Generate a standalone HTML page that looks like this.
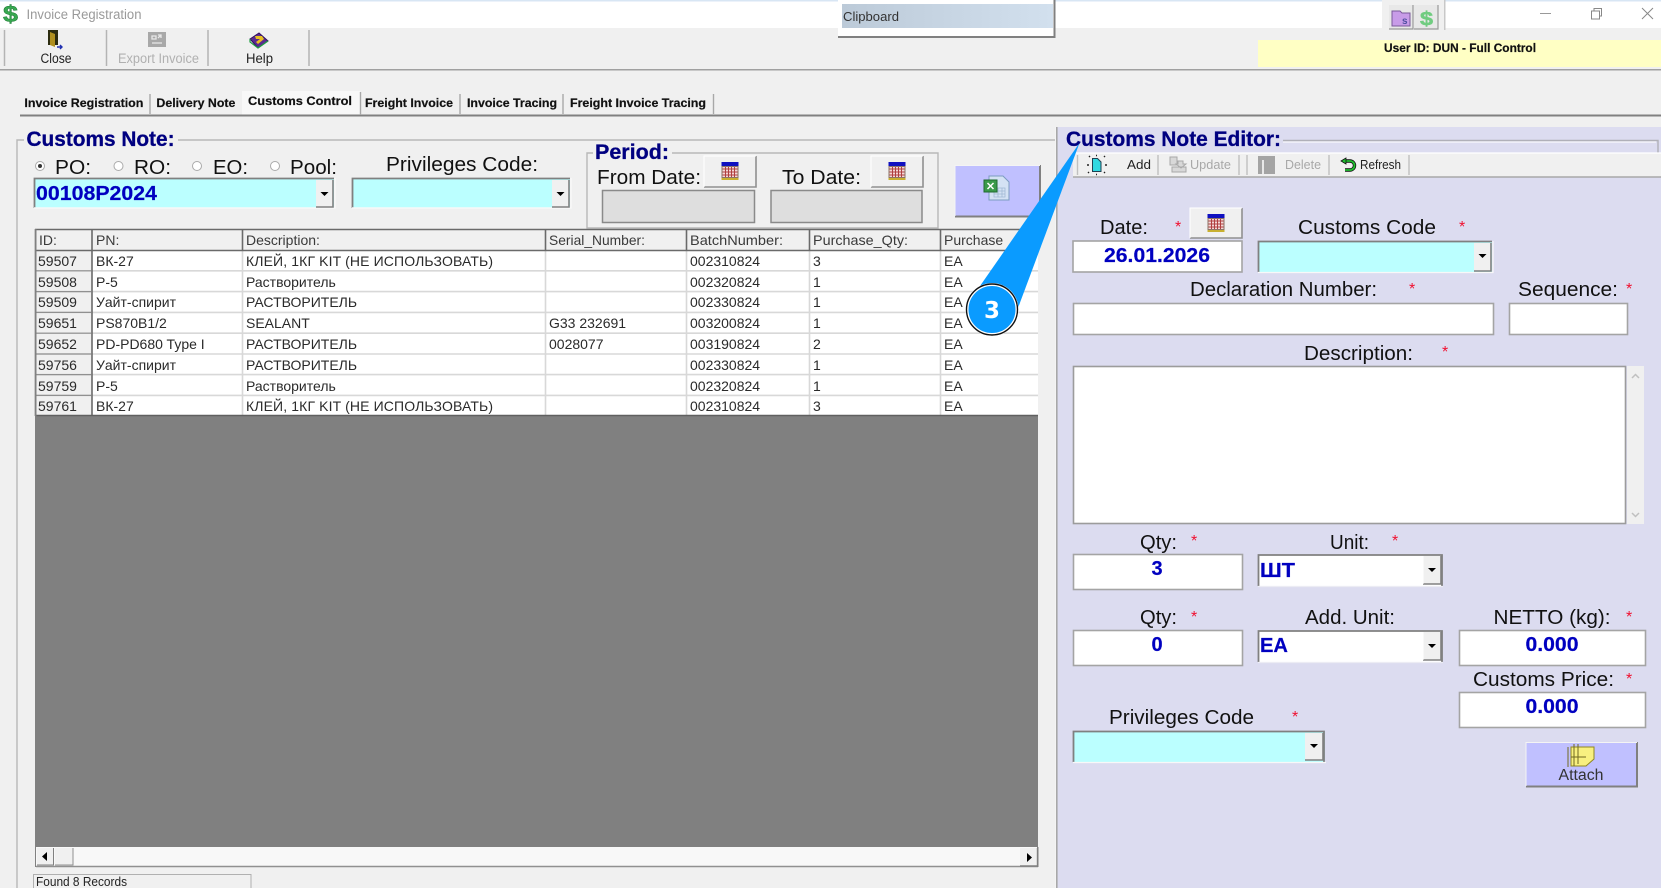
<!DOCTYPE html>
<html><head><meta charset="utf-8"><title>Invoice Registration</title>
<style>
html,body{margin:0;padding:0;background:#f0f0f0;width:1661px;height:888px;overflow:hidden}
svg{display:block;filter:blur(.35px)}
text{font-family:"Liberation Sans",sans-serif}
.t{font-size:14px;fill:#2a2a2a}
.h{font-size:14px;fill:#3a3a3a}
.l{font-size:20px;fill:#111}
.n{font-size:21px;font-weight:bold;fill:#000080;stroke:#000080;stroke-width:.3px}
.v{font-size:20px;font-weight:bold;fill:#0000c0;stroke:#0000c0;stroke-width:.2px}
.s{font-size:16px;fill:#f01030}
.b{font-size:12px;font-weight:bold;fill:#111;stroke:#111;stroke-width:.2px}
.m{font-size:13px;fill:#222}
.g{font-size:13px;fill:#a8a8a8}
</style></head><body>
<svg width="1661" height="888" viewBox="0 0 1661 888" xmlns="http://www.w3.org/2000/svg">
<defs>
<g id="cal"><rect x="0" y="0" width="17" height="18" fill="#8c7468"/><rect x="0" y="0" width="17" height="4" fill="#1010c0"/><rect x="1" y="5" width="15" height="10" fill="#f4d8d8"/><path d="M1 7h15M1 10h15M1 13h15M4 5v10M7 5v10M10 5v10M13 5v10" stroke="#b04040" stroke-width="1"/><rect x="0" y="16" width="17" height="2" fill="#c8b030"/></g>
<g id="arr"><path d="M-4-2h8l-4 4z" fill="#000"/></g>
<linearGradient id="cg"><stop offset="0" stop-color="#bccad8"/><stop offset="1" stop-color="#d2e0ee"/></linearGradient>
</defs>

<!-- title bar -->
<rect width="1661" height="28" fill="#fff"/>
<rect width="1661" height="1.5" fill="#d8e6f4"/>
<text x="3" y="22" font-size="23" font-weight="bold" fill="#38a850" stroke="#1c7a34" stroke-width=".5" textLength="15" lengthAdjust="spacingAndGlyphs">$</text>
<text x="26.5" y="19" font-size="13.5" fill="#9a9a9a" textLength="115" lengthAdjust="spacingAndGlyphs">Invoice Registration</text>

<!-- clipboard popup -->
<rect x="838" y="0" width="217" height="38" fill="#fff"/>
<path d="M838 37H1054.5V0" fill="none" stroke="#808080" stroke-width="2"/>
<rect x="842" y="4" width="211" height="24" fill="url(#cg)"/>
<text x="843" y="21" font-size="12.5" fill="#333" textLength="56" lengthAdjust="spacingAndGlyphs">Clipboard</text>

<!-- top right icons -->
<rect x="1382" y="0" width="63" height="30" fill="#f0f0f0"/>
<rect x="1444" y="0" width="1.5" height="30" fill="#c8c8c8"/>
<rect x="1389" y="5" width="24" height="24" fill="#e8e8e8"/><path d="M1389 29h24v-24" fill="none" stroke="#999" stroke-width="1.2"/>
<rect x="1414" y="5" width="24" height="24" fill="#e8e8e8"/><path d="M1414 29h24v-24" fill="none" stroke="#999" stroke-width="1.2"/>
<path d="M1392 11h8l2 2h8v13h-18z" fill="#c89ce8" stroke="#7a5a9a"/>
<text x="1402" y="24" font-size="10" font-weight="bold" fill="#5050a0">s</text>
<text x="1420" y="25" font-size="19" font-weight="bold" fill="#70cc80" stroke="#70cc80" stroke-width=".5" textLength="13" lengthAdjust="spacingAndGlyphs">$</text>
<path d="M1540 13.5h11" stroke="#999" stroke-width="1"/>
<rect x="1591.5" y="11" width="8" height="8" fill="none" stroke="#888"/><path d="M1594 11V8.500h7.500V16H1599.500" fill="none" stroke="#888"/>
<path d="M1642 8l11 11M1653 8l-11 11" stroke="#888" stroke-width="1"/>

<!-- main toolbar -->
<rect y="69" width="1661" height="1.5" fill="#a0a0a0"/>
<rect x="1258" y="40" width="403" height="27" fill="#ffffc4"/>
<text x="1384" y="52" class="b" textLength="152" lengthAdjust="spacingAndGlyphs">User ID: DUN - Full Control</text>
<path d="M4.5 30v36M106.5 30v36M208 30v36M309 30v36" stroke="#b4b4b4" stroke-width="1.5"/>
<!-- close icon -->
<path d="M48 30h10v15h-10z" fill="#2c2c10"/><path d="M50 32l5 2v13l-5-2z" fill="#b09020"/><path d="M57 47h5m-2-2l2 2-2 2" stroke="#2030b0" stroke-width="1.4" fill="none"/>
<text x="40.5" y="63" font-size="13.5" fill="#222" textLength="31" lengthAdjust="spacingAndGlyphs">Close</text>
<!-- export icon -->
<rect x="148" y="32" width="18" height="15" fill="#a8a8a8"/><path d="M152 36h4v3h-4zM161 35l-3 3m0-3h3v3M152 43h10" stroke="#e8e8e8" fill="none" stroke-width="1.300"/>
<text x="118" y="63" font-size="13.5" fill="#b0b0b0" textLength="81" lengthAdjust="spacingAndGlyphs">Export Invoice</text>
<!-- help icon -->
<path d="M250 39l9-6 9 8-10 7z" fill="#5a2a90" stroke="#301060"/><path d="M250 39v3l8 6 10-7" fill="none" stroke="#20a040" stroke-width="1.200"/><path d="M255 36h7l2 3-6 5-2-2 4-3h-4z" fill="#e8c020"/>
<text x="246" y="63" font-size="13.5" fill="#222" textLength="27" lengthAdjust="spacingAndGlyphs">Help</text>

<!-- tabs -->
<rect x="242" y="91" width="118" height="25" fill="#f8f8f8"/>
<path d="M20 115.500H1661" stroke="#808080" stroke-width="2"/>
<path d="M150 94v20M360.500 92v23M460 94v20M563 94v20M713.500 94v20" stroke="#a8a8a8" stroke-width="1.400"/>
<text x="24.400" y="107" class="b" textLength="119" lengthAdjust="spacingAndGlyphs">Invoice Registration</text>
<text x="156.400" y="107" class="b" textLength="79" lengthAdjust="spacingAndGlyphs">Delivery Note</text>
<text x="248" y="105" class="b" textLength="104" lengthAdjust="spacingAndGlyphs">Customs Control</text>
<text x="365" y="107" class="b" textLength="88" lengthAdjust="spacingAndGlyphs">Freight Invoice</text>
<text x="467" y="107" class="b" textLength="90" lengthAdjust="spacingAndGlyphs">Invoice Tracing</text>
<text x="570" y="107" class="b" textLength="136" lengthAdjust="spacingAndGlyphs">Freight Invoice Tracing</text>

<!-- customs note group -->
<path d="M24 140H17V888M178 140H1055" fill="none" stroke="#b8b8b8" stroke-width="1.400"/>
<text x="26.500" y="146" class="n" textLength="148" lengthAdjust="spacingAndGlyphs">Customs Note:</text>

<!-- radios -->
<circle cx="40" cy="166" r="4.500" fill="#fff" stroke="#aaa"/><circle cx="40" cy="166" r="2" fill="#333"/>
<circle cx="118.500" cy="166" r="4.500" fill="#fff" stroke="#aaa"/>
<circle cx="197" cy="166" r="4.500" fill="#fff" stroke="#aaa"/>
<circle cx="275" cy="166" r="4.500" fill="#fff" stroke="#aaa"/>
<text x="55" y="174" class="l" textLength="36" lengthAdjust="spacingAndGlyphs">PO:</text>
<text x="134" y="174" class="l" textLength="37" lengthAdjust="spacingAndGlyphs">RO:</text>
<text x="213" y="174" class="l" textLength="35" lengthAdjust="spacingAndGlyphs">EO:</text>
<text x="290" y="174" class="l" textLength="47" lengthAdjust="spacingAndGlyphs">Pool:</text>
<text x="386" y="171" class="l" textLength="152" lengthAdjust="spacingAndGlyphs">Privileges Code:</text>

<!-- combos left -->
<rect x="34" y="178" width="300" height="30" fill="#bbffff"/><path d="M34.500 208V178.500H334" fill="none" stroke="#808080" stroke-width="1.800"/><path d="M34 208h301V178" fill="none" stroke="#f8f8f8" stroke-width="1.400"/>
<rect x="316" y="180" width="17" height="27" fill="#f0f0f0"/><path d="M316 207h17v-27" fill="none" stroke="#808080" stroke-width="1.600"/><use href="#arr" x="324.500" y="194"/>
<text x="36" y="200" class="v" textLength="121" lengthAdjust="spacingAndGlyphs">00108P2024</text>
<rect x="352" y="178" width="218" height="30" fill="#bbffff"/><path d="M352.500 208V178.500H570" fill="none" stroke="#808080" stroke-width="1.800"/><path d="M352 208h219V178" fill="none" stroke="#f8f8f8" stroke-width="1.400"/>
<rect x="552" y="180" width="17" height="27" fill="#f0f0f0"/><path d="M552 207h17v-27" fill="none" stroke="#808080" stroke-width="1.600"/><use href="#arr" x="560.500" y="194"/>

<!-- period -->
<path d="M593 153H587V228H938V153H672" fill="none" stroke="#b8b8b8" stroke-width="1.400"/>
<text x="595" y="159" class="n" textLength="74" lengthAdjust="spacingAndGlyphs">Period:</text>
<text x="597" y="184" class="l" textLength="104" lengthAdjust="spacingAndGlyphs">From Date:</text>
<text x="782" y="184" class="l" textLength="79" lengthAdjust="spacingAndGlyphs">To Date:</text>
<rect x="704" y="156" width="52" height="31" fill="#f0f0f0"/><path d="M704 187h52v-31" fill="none" stroke="#909090" stroke-width="1.600"/><path d="M704 187v-31h52" fill="none" stroke="#fff"/>
<use href="#cal" x="721.500" y="162"/>
<rect x="871" y="156" width="52" height="31" fill="#f0f0f0"/><path d="M871 187h52v-31" fill="none" stroke="#909090" stroke-width="1.600"/><path d="M871 187v-31h52" fill="none" stroke="#fff"/>
<use href="#cal" x="888.500" y="162"/>
<rect x="602.500" y="190.500" width="152" height="32" fill="#dedede" stroke="#8a8a8a" stroke-width="1.500"/>
<rect x="771" y="190.500" width="151" height="32" fill="#dedede" stroke="#8a8a8a" stroke-width="1.500"/>

<!-- excel button -->
<rect x="955" y="165" width="85" height="52" fill="#c0c0ff"/><path d="M955 216.500h85V165" fill="none" stroke="#808080" stroke-width="2"/><path d="M955 216V165.500h85" fill="none" stroke="#f4f4f4"/>
<path d="M989 176h14l6 6v18h-20z" fill="#d4e2f4" stroke="#7c9cc0"/><path d="M994 188h11v9h-11zM994 191h11M994 194h11M998 188v9M1002 188v9" fill="none" stroke="#a0b8d4" stroke-width=".8"/><rect x="984" y="180" width="13" height="12" fill="#3a9a4a" stroke="#206a30"/><path d="M987.500 183l6 6m0-6l-6 6" stroke="#fff" stroke-width="1.500"/>

<!-- table -->
<rect x="35" y="229" width="1003" height="187" fill="#fff"/>
<rect x="36" y="230" width="1002" height="20" fill="#f0f0f0"/>
<rect x="36" y="250" width="56" height="166" fill="#f0f0f0"/>
<path d="M36 270.800H1038M36 291.600H1038M36 312.400H1038M36 333.200H1038M36 354H1038M36 374.600H1038M36 395.400H1038" stroke="#d8d8d8" stroke-width="1.600"/>
<path d="M242.500 250V416M545.500 250V416M686.500 250V416M809.500 250V416M940.500 250V416" stroke="#d8d8d8" stroke-width="1.600"/>
<path d="M36 270.800H91M36 291.600H91M36 312.400H91M36 333.200H91M36 354H91M36 374.600H91M36 395.400H91" stroke="#909090" stroke-width="1.200"/>
<path d="M92 229V416M35.500 229V416M242.500 229V250M545.500 229V250M686.500 229V250M809.500 229V250M940.500 229V250" stroke="#6a6a6a" stroke-width="1.600"/>
<path d="M35 229.500H1038M35 250.500H1038" stroke="#6a6a6a" stroke-width="1.600"/>
<text x="39" y="245" class="h">ID:</text>
<text x="96" y="245" class="h">PN:</text>
<text x="246" y="245" class="h">Description:</text>
<text x="549" y="245" class="h" textLength="96" lengthAdjust="spacingAndGlyphs">Serial_Number:</text>
<text x="690" y="245" class="h" textLength="93" lengthAdjust="spacingAndGlyphs">BatchNumber:</text>
<text x="813" y="245" class="h" textLength="95" lengthAdjust="spacingAndGlyphs">Purchase_Qty:</text>
<text x="944" y="245" class="h">Purchase</text>

<text x="38" y="266" class="t">59507</text><text x="96" y="266" class="t">ВК-27</text><text x="246" y="266" class="t" textLength="247">КЛЕЙ, 1КГ KIT (НЕ ИСПОЛЬЗОВАТЬ)</text><text x="690" y="266" class="t">002310824</text><text x="813" y="266" class="t">3</text><text x="944" y="266" class="t">EA</text>
<text x="38" y="287" class="t">59508</text><text x="96" y="287" class="t">Р-5</text><text x="246" y="287" class="t">Растворитель</text><text x="690" y="287" class="t">002320824</text><text x="813" y="287" class="t">1</text><text x="944" y="287" class="t">EA</text>
<text x="38" y="307" class="t">59509</text><text x="96" y="307" class="t">Уайт-спирит</text><text x="246" y="307" class="t">РАСТВОРИТЕЛЬ</text><text x="690" y="307" class="t">002330824</text><text x="813" y="307" class="t">1</text><text x="944" y="307" class="t">EA</text>
<text x="38" y="328" class="t">59651</text><text x="96" y="328" class="t">PS870B1/2</text><text x="246" y="328" class="t">SEALANT</text><text x="549" y="328" class="t">G33 232691</text><text x="690" y="328" class="t">003200824</text><text x="813" y="328" class="t">1</text><text x="944" y="328" class="t">EA</text>
<text x="38" y="349" class="t">59652</text><text x="96" y="349" class="t">PD-PD680 Type I</text><text x="246" y="349" class="t">РАСТВОРИТЕЛЬ</text><text x="549" y="349" class="t">0028077</text><text x="690" y="349" class="t">003190824</text><text x="813" y="349" class="t">2</text><text x="944" y="349" class="t">EA</text>
<text x="38" y="370" class="t">59756</text><text x="96" y="370" class="t">Уайт-спирит</text><text x="246" y="370" class="t">РАСТВОРИТЕЛЬ</text><text x="690" y="370" class="t">002330824</text><text x="813" y="370" class="t">1</text><text x="944" y="370" class="t">EA</text>
<text x="38" y="391" class="t">59759</text><text x="96" y="391" class="t">Р-5</text><text x="246" y="391" class="t">Растворитель</text><text x="690" y="391" class="t">002320824</text><text x="813" y="391" class="t">1</text><text x="944" y="391" class="t">EA</text>
<text x="38" y="411" class="t">59761</text><text x="96" y="411" class="t">ВК-27</text><text x="246" y="411" class="t" textLength="247">КЛЕЙ, 1КГ KIT (НЕ ИСПОЛЬЗОВАТЬ)</text><text x="690" y="411" class="t">002310824</text><text x="813" y="411" class="t">3</text><text x="944" y="411" class="t">EA</text>

<!-- gray area and scrollbar -->
<rect x="35" y="416" width="1003" height="431" fill="#808080"/>
<path d="M35 415.500H1038" stroke="#606060" stroke-width="1.400"/>
<rect x="35" y="229" width="1.500" height="638" fill="#808080"/>
<rect x="36" y="847" width="1002" height="19" fill="#f8f8f8"/>
<path d="M36 866.500H1038" stroke="#909090" stroke-width="1.400"/>
<rect x="37" y="848" width="17" height="17" fill="#f0f0f0"/><path d="M37 865h16.500v-17" fill="none" stroke="#808080"/>
<path d="M47 852v9l-5-4.500z" fill="#000"/>
<rect x="55" y="848" width="18" height="17" fill="#f0f0f0"/><path d="M55 865h18v-17" fill="none" stroke="#909090"/>
<rect x="1020" y="848" width="17" height="18" fill="#f0f0f0"/><path d="M1020 866h17.500v-18" fill="none" stroke="#808080" stroke-width="1.400"/>
<path d="M1027 853v9l5-4.500z" fill="#000"/>
<rect x="1037" y="847" width="1.500" height="20" fill="#808080"/>

<!-- status -->
<path d="M33.500 888V874.500H251V888" fill="none" stroke="#b0b0b0"/>
<text x="36" y="886" font-size="12.500" fill="#222" textLength="91" lengthAdjust="spacingAndGlyphs">Found 8 Records</text>

<!-- right panel -->
<rect x="1055" y="127" width="606" height="761" fill="#dcdcf0"/>
<rect x="1055" y="127" width="1" height="761" fill="#f4f4f4"/>
<rect x="1056" y="127" width="1.600" height="761" fill="#a8a8a8"/>
<path d="M1283 140.500H1658V153" fill="none" stroke="#b0b0b8" stroke-width="1.400"/>
<path d="M1283 142H1656" stroke="#fff"/>
<text x="1066" y="146" class="n" textLength="215" lengthAdjust="spacingAndGlyphs">Customs Note Editor:</text>

<!-- editor toolbar -->
<rect x="1073" y="153" width="588" height="24" fill="#f0f0f0"/>
<path d="M1073 153H1661" stroke="#fff" stroke-width="1.200"/>
<path d="M1073 177H1661" stroke="#a8a8a8" stroke-width="1.500"/>
<path d="M1077.500 155v20M1158 155v20M1239 155v20M1247 155v20M1329 155v20M1409 155v20" stroke="#c0c0c0" stroke-width="1.400"/>
<path d="M1092.500 158.500h5l3.500 3.500v9.500h-8.500z" fill="#30d8e0" stroke="#204050"/><path d="M1097 155.500h-1M1090 157l-1-1M1104 157l1-1M1089 165h-2M1105 165h2M1089 172l-1 1M1104 172l1 1M1097 174.500h-1" stroke="#222" stroke-width="1.400"/>
<text x="1127" y="169" class="m" textLength="24" lengthAdjust="spacingAndGlyphs">Add</text>
<path d="M1170 157h7v8h-7zM1172 167h14v5h-14zM1178 161h5v3h3l-5 4-5-4h2z" fill="#d8d8d8" stroke="#a8a8a8"/>
<text x="1190" y="169" class="g" textLength="41" lengthAdjust="spacingAndGlyphs">Update</text>
<rect x="1258" y="156" width="17" height="18" fill="#a4a4a4"/><rect x="1262" y="160" width="2" height="14" fill="#e8e8e8"/>
<text x="1285" y="169" class="g" textLength="36" lengthAdjust="spacingAndGlyphs">Delete</text>
<path d="M1344 161h6a4.500 4.500 0 0 1 0 9h-5" fill="none" stroke="#111" stroke-width="3.400"/><path d="M1344 161h6a4.500 4.500 0 0 1 0 9h-5" fill="none" stroke="#20c030" stroke-width="1.800"/><path d="M1341 161l5-3v6z" fill="#20c030" stroke="#111" stroke-width=".8"/>
<text x="1360" y="169" class="m" textLength="41" lengthAdjust="spacingAndGlyphs">Refresh</text>

<!-- editor fields -->
<text x="1100" y="234" class="l" textLength="48" lengthAdjust="spacingAndGlyphs">Date:</text>
<text x="1175" y="232" class="s">*</text>
<rect x="1190" y="208" width="52" height="30" fill="#f0f0f0"/><path d="M1190 238h52v-30" fill="none" stroke="#909090" stroke-width="1.600"/><path d="M1190 238v-30h52" fill="none" stroke="#fff"/>
<use href="#cal" x="1207.500" y="214"/>
<rect x="1073" y="241" width="169" height="31" fill="#fff" stroke="#a4a4a4" stroke-width="1.600"/>
<text x="1157" y="262" class="v" text-anchor="middle" textLength="106" lengthAdjust="spacingAndGlyphs">26.01.2026</text>

<text x="1298" y="234" class="l" textLength="138" lengthAdjust="spacingAndGlyphs">Customs Code</text>
<text x="1459" y="232" class="s">*</text>
<rect x="1258" y="241" width="234" height="31" fill="#bbffff"/><path d="M1258.500 272V241.500H1492" fill="none" stroke="#808080" stroke-width="1.800"/><path d="M1258 272.500h235V241" fill="none" stroke="#f8f8f8" stroke-width="1.200"/>
<rect x="1474" y="243" width="17" height="28" fill="#f0f0f0"/><path d="M1474 271h17v-28" fill="none" stroke="#808080" stroke-width="1.600"/><use href="#arr" x="1482.500" y="256"/>

<text x="1190" y="296" class="l" textLength="187" lengthAdjust="spacingAndGlyphs">Declaration Number:</text>
<text x="1409" y="294" class="s">*</text>
<text x="1518" y="296" class="l" textLength="100" lengthAdjust="spacingAndGlyphs">Sequence:</text>
<text x="1626" y="294" class="s">*</text>
<rect x="1073.500" y="303.500" width="420" height="31" fill="#fff" stroke="#a4a4a4" stroke-width="1.600"/>
<rect x="1509.500" y="303.500" width="118" height="31" fill="#fff" stroke="#a4a4a4" stroke-width="1.600"/>

<text x="1304" y="360" class="l" textLength="109" lengthAdjust="spacingAndGlyphs">Description:</text>
<text x="1442" y="357" class="s">*</text>
<rect x="1073.500" y="366.500" width="552" height="157" fill="#fff" stroke="#9c9c9c" stroke-width="1.600"/>
<rect x="1627" y="366" width="17" height="158" fill="#f0f0f0"/>
<path d="M1632 378l3.500-3.500 3.500 3.500M1632 513l3.500 3.500 3.500-3.500" fill="none" stroke="#c0c0c0" stroke-width="1.500"/>

<text x="1140" y="549" class="l" textLength="37" lengthAdjust="spacingAndGlyphs">Qty:</text>
<text x="1191" y="546" class="s">*</text>
<text x="1330" y="549" class="l" textLength="39" lengthAdjust="spacingAndGlyphs">Unit:</text>
<text x="1392" y="546" class="s">*</text>
<rect x="1073.500" y="554.500" width="169" height="35" fill="#fff" stroke="#a4a4a4" stroke-width="1.600"/>
<text x="1157" y="575" class="v" text-anchor="middle">3</text>
<rect x="1258" y="555" width="184" height="31" fill="#fff"/><path d="M1258.500 586V555H1442V586" fill="none" stroke="#808080" stroke-width="1.800"/><path d="M1258 586.500h185" stroke="#ececf4" stroke-width="1.200"/>
<rect x="1423" y="556" width="18" height="28" fill="#f0f0f0"/><path d="M1423 584h18v-28" fill="none" stroke="#808080" stroke-width="1.600"/><path d="M1423 556v28" stroke="#fff"/><use href="#arr" x="1432" y="570"/>
<text x="1260" y="577" class="v" textLength="35" lengthAdjust="spacingAndGlyphs">ШТ</text>

<text x="1140" y="624" class="l" textLength="37" lengthAdjust="spacingAndGlyphs">Qty:</text>
<text x="1191" y="622" class="s">*</text>
<text x="1305" y="624" class="l" textLength="90" lengthAdjust="spacingAndGlyphs">Add. Unit:</text>
<text x="1493.500" y="624" class="l" textLength="117" lengthAdjust="spacingAndGlyphs">NETTO (kg):</text>
<text x="1626" y="622" class="s">*</text>
<rect x="1073.500" y="630.500" width="169" height="35" fill="#fff" stroke="#a4a4a4" stroke-width="1.600"/>
<text x="1157" y="651" class="v" text-anchor="middle">0</text>
<rect x="1258" y="631" width="184" height="31" fill="#fff"/><path d="M1258.500 662V631H1442V662" fill="none" stroke="#808080" stroke-width="1.800"/><path d="M1258 662.500h185" stroke="#ececf4" stroke-width="1.200"/>
<rect x="1423" y="632" width="18" height="28" fill="#f0f0f0"/><path d="M1423 660h18v-28" fill="none" stroke="#808080" stroke-width="1.600"/><path d="M1423 632v28" stroke="#fff"/><use href="#arr" x="1432" y="646"/>
<text x="1260" y="652" class="v" textLength="28" lengthAdjust="spacingAndGlyphs">EA</text>
<rect x="1459.500" y="630.500" width="186" height="35" fill="#fff" stroke="#a4a4a4" stroke-width="1.600"/>
<text x="1552" y="651" class="v" text-anchor="middle" textLength="53" lengthAdjust="spacingAndGlyphs">0.000</text>

<text x="1473" y="686" class="l" textLength="141" lengthAdjust="spacingAndGlyphs">Customs Price:</text>
<text x="1626" y="684" class="s">*</text>
<rect x="1459.500" y="692.500" width="186" height="35" fill="#fff" stroke="#a4a4a4" stroke-width="1.600"/>
<text x="1552" y="713" class="v" text-anchor="middle" textLength="53" lengthAdjust="spacingAndGlyphs">0.000</text>

<text x="1109" y="724" class="l" textLength="145" lengthAdjust="spacingAndGlyphs">Privileges Code</text>
<text x="1292" y="722" class="s">*</text>
<rect x="1073" y="731" width="252" height="31" fill="#bbffff"/><path d="M1073.500 762V731.500H1324V762" fill="none" stroke="#808080" stroke-width="1.800"/><path d="M1073 762.500h253" stroke="#f8f8f8" stroke-width="1.200"/>
<rect x="1305" y="733" width="18" height="27" fill="#f0f0f0"/><path d="M1305 760h18v-27" fill="none" stroke="#808080" stroke-width="1.600"/><use href="#arr" x="1314" y="746"/>

<rect x="1526" y="742" width="111" height="45" fill="#c0c0ff"/><path d="M1526 786.500h111V742" fill="none" stroke="#808080" stroke-width="2"/><path d="M1526 786V742.500h111" fill="none" stroke="#f4f4f4"/>
<path d="M1571 747h23v12l-8 7h-15z" fill="#f8f080" stroke="#908820"/><path d="M1568 747v20M1574 744v22M1578 744v20M1571 757h15" stroke="#706820" stroke-width="1" fill="none"/>
<text x="1581" y="780" font-size="15.500" fill="#333" text-anchor="middle" textLength="45" lengthAdjust="spacingAndGlyphs">Attach</text>

<!-- callout -->
<polygon points="1079.500,143 980,286 1018,308" fill="#0a9bff"/>
<circle cx="992" cy="309.500" r="25" fill="#0a9bff" stroke="#fff" stroke-width="3"/>
<circle cx="992" cy="309.500" r="25.500" fill="none" stroke="#111" stroke-width="1.400"/>
<text x="992" y="318" font-size="23" font-weight="bold" fill="#fff" text-anchor="middle" style="font-family:'DejaVu Sans',sans-serif">3</text>
</svg>
</body></html>
